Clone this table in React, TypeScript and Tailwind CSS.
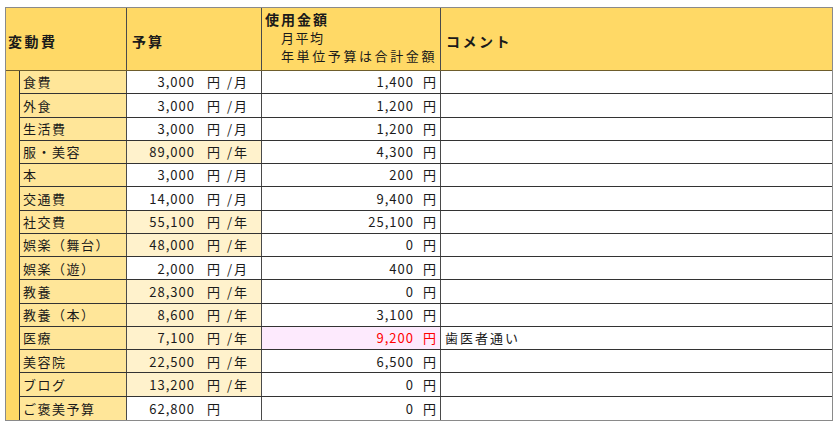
const rows = [
  { label: "食費", budget: "3,000", unit: "月", used: "1,400" },
  { label: "外食", budget: "3,000", unit: "月", used: "1,200" },
  { label: "生活費", budget: "3,000", unit: "月", used: "1,200" },
  { label: "服・美容", budget: "89,000", unit: "年", used: "4,300" },
  { label: "本", budget: "3,000", unit: "月", used: "200" },
  { label: "交通費", budget: "14,000", unit: "月", used: "9,400" },
  { label: "社交費", budget: "55,100", unit: "年", used: "25,100" },
  { label: "娯楽（舞台）", budget: "48,000", unit: "年", used: "0" },
  { label: "娯楽（遊）", budget: "2,000", unit: "月", used: "400" },
  { label: "教養", budget: "28,300", unit: "年", used: "0" },
  { label: "教養（本）", budget: "8,600", unit: "年", used: "3,100" },
  { label: "医療", budget: "7,100", unit: "年", used: "9,200", over: true, note: "歯医者通い" },
  { label: "美容院", budget: "22,500", unit: "年", used: "6,500" },
  { label: "ブログ", budget: "13,200", unit: "年", used: "0" },
  { label: "ご褒美予算", budget: "62,800", unit: "", used: "0" },
];

const font = "font-['Noto_Sans_CJK_JP','Noto_Sans',sans-serif]";

export default function App() {
  return (
    <div className={`w-[840px] h-[428px] bg-white pt-[7px] pl-[5px] ${font} text-[13px] text-[#1a1a1a]`}>
      <div className="w-[828px] border border-[#8a8a8a]">
        {/* header */}
        <div className="flex h-[63px] bg-[#ffd966] border-b border-[#6e5d2c]">
          <div className="w-[121px] flex items-center pl-[2px] pt-[4px] font-bold text-[14px] tracking-[2.5px] border-r border-[#4a4a4a]">
            変動費
          </div>
          <div className="w-[135px] flex items-center pl-[5px] pt-[4px] font-bold text-[14px] tracking-[2px] border-r border-[#4a4a4a]">
            予算
          </div>
          <div className="w-[179px] pl-[3px] pt-[2px] border-r border-[#4a4a4a] leading-[18.5px]">
            <div className="font-bold text-[14px] tracking-[2px]">使用金額</div>
            <div className="pl-[16px] tracking-[1.5px]">月平均</div>
            <div className="pl-[16px] tracking-[2.6px]">年単位予算は合計金額</div>
          </div>
          <div className="flex-1 flex items-center pl-[5px] pt-[4px] font-bold text-[14px] tracking-[2.5px]">
            コメント
          </div>
        </div>
        {/* body */}
        <div className="flex">
          <div className="w-[14px] bg-[#ffd966] border-r border-[#333]" />
          <div className="flex-1">
            {rows.map((r, i) => (
              <div
                key={r.label}
                className={`flex h-[23.27px] ${i < rows.length - 1 ? "border-b border-[#333]" : ""}`}
              >
                <div className="w-[107px] bg-[#ffe699] flex items-center pl-[3px] tracking-[1.5px] border-r border-[#4a4a4a]">
                  {r.label}
                </div>
                <div
                  className={`w-[135px] flex items-center justify-end pr-[14px] border-r border-[#4a4a4a] ${
                    r.unit === "年" ? "bg-[#fff2cc]" : "bg-white"
                  }`}
                >
                  <span className="tracking-[1px]">{r.budget}</span>
                  <span className="ml-[12px] w-[13px]">円</span>
                  <span className="w-[27px] flex justify-end">
                    {r.unit && (
                      <>
                        <span>/</span>
                        <span className="ml-[2px]">{r.unit}</span>
                      </>
                    )}
                  </span>
                </div>
                <div
                  className={`w-[179px] flex items-center justify-end pr-[4px] border-r border-[#4a4a4a] ${
                    r.over ? "bg-[#fdeafd] text-[#ff0000]" : "bg-white"
                  }`}
                >
                  <span className="tracking-[1px]">{r.used}</span>
                  <span className="ml-[9px] w-[13px]">円</span>
                </div>
                <div className="flex-1 flex items-center pl-[4px] tracking-[2px] bg-white">{r.note}</div>
              </div>
            ))}
          </div>
        </div>
      </div>
    </div>
  );
}
